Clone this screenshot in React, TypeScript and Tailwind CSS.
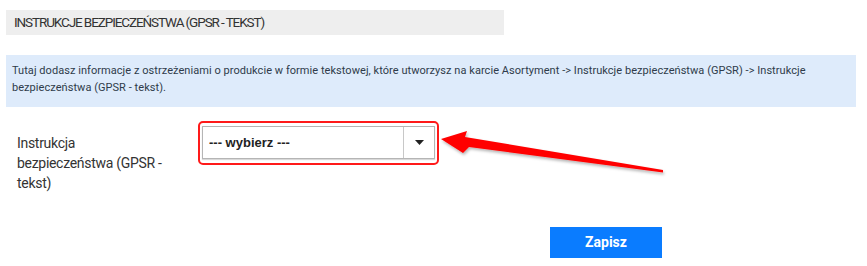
export default function App() {
  return (
    <div className="relative w-[867px] h-[266px] bg-white font-['Roboto',sans-serif] text-[#333]">
      <div className="pt-[10px] pl-[6px] pr-[11px]">
        <div className="w-[498px] h-[25px] bg-[#eeeeee] flex items-center pl-[8px] text-[13.5px] tracking-[-1.1px] uppercase text-[#333]">
          Instrukcje bezpieczeństwa (GPSR - tekst)
        </div>

        <div className="mt-[20px] h-[52px] bg-[#deebfb] pl-[6px] pt-[7px] text-[11px] leading-[17px] tracking-[0.05px] text-[#2f3b4a]">
          <p className="max-w-[830px]">
            Tutaj dodasz informacje z ostrzeżeniami o produkcie w formie tekstowej, które utworzysz na karcie Asortyment -&gt; Instrukcje bezpieczeństwa (GPSR) -&gt; Instrukcje bezpieczeństwa (GPSR - tekst).
          </p>
        </div>

        <div className="mt-[14px] flex items-start">
          <div className="w-[192px] pl-[11px] pt-[12px] text-[14px] leading-[20px] tracking-[-0.3px] text-[#333]">
            <div className="w-[152px]">Instrukcja bezpieczeństwa (GPSR - tekst)</div>
          </div>
          <div className="w-[241px] h-[44px] border-2 border-[#ff1a1a] rounded-[5px] pt-[3px] pl-[2px] pr-[2px]">
            <div className="h-[33px] border border-[#b5b5b5] bg-white flex items-center shadow-[0_1px_1px_rgba(0,0,0,0.15)]">
              <span className="flex-1 pl-[6px] font-['Liberation_Sans',sans-serif] font-bold text-[13px] text-[#222]">
                --- wybierz ---
              </span>
              <span className="w-[31px] h-full border-l border-[#c8c8c8] flex items-center justify-center">
                <svg width="9" height="5" viewBox="0 0 9 5">
                  <path d="M0 0 H9 L4.5 5 Z" fill="#222" />
                </svg>
              </span>
            </div>
          </div>
        </div>

        <div className="mt-[34px] pl-[544px]">
          <button className="w-[112px] h-[31px] bg-[#0a7cff] text-white font-bold text-[14px] font-['Roboto',sans-serif]">
            Zapisz
          </button>
        </div>
      </div>

      {/* annotation arrow */}
      <svg className="absolute left-0 top-0 pointer-events-none" width="867" height="266">
        <defs>
          <filter id="sh" x="-10%" y="-50%" width="120%" height="200%">
            <feDropShadow dx="1" dy="2" stdDeviation="1.5" floodColor="#000" floodOpacity="0.3" />
          </filter>
        </defs>
        <polygon
          points="441,139 467,131 465,137 663,170 663,172.5 469,147 463,153"
          fill="#ff0000"
          filter="url(#sh)"
        />
      </svg>
    </div>
  )
}
